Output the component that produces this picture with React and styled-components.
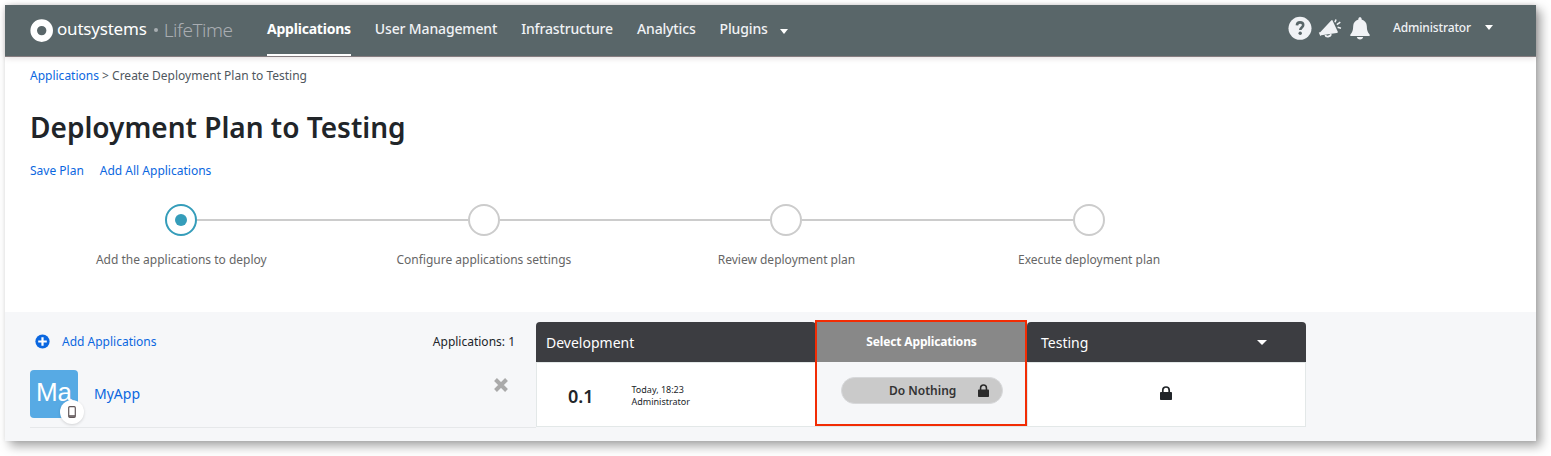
import React from "react";
import styled, { createGlobalStyle } from "styled-components";

const GlobalStyle = createGlobalStyle`
  * { box-sizing: border-box; }
  body {
    margin: 0;
    display: flow-root;
    min-height: 456px;
    background: #fff;
    color: #212529;
    font-family: "Noto Sans", "Open Sans", sans-serif;
    font-size: 12px;
  }
`;

const Window = styled.div`
  width: 1531px;
  height: 436px;
  margin: 5px 0 0 5px;
  display: flex;
  flex-direction: column;
  background: #fff;
  box-shadow: 5px 5px 10px rgba(0, 0, 0, 0.36), 0 0 4px rgba(0, 0, 0, 0.06);
`;

const Header = styled.header`
  flex: none;
  height: 52px;
  padding-left: 25px;
  display: flex;
  align-items: stretch;
  background: #596669;
  border-bottom: 1px solid #857d80;
  box-shadow: 0 1px 6px rgba(60, 20, 30, 0.15);
  color: #f0f2f5;
`;

const Brand = styled.div`
  width: 237px;
  display: flex;
  align-items: flex-start;
  svg { flex: none; margin-top: 14px; }
`;

const BrandName = styled.span`
  margin-left: 4px;
  margin-top: 12px;
  line-height: 24px;
  font-size: 17px;
  letter-spacing: -0.2px;
  color: #fff;
`;

const BrandDot = styled.i`
  width: 4px;
  height: 4px;
  margin: 23px 0 0 7px;
  border-radius: 50%;
  background: #a8aeb2;
`;

const ProductName = styled.span`
  margin-left: 6px;
  margin-top: 12px;
  line-height: 26px;
  font-size: 19px;
  font-weight: 350;
  letter-spacing: -0.45px;
  color: #a9adb2;
`;

const Nav = styled.nav`
  display: flex;
  gap: 24px;
`;

const NavItem = styled.a`
  display: flex;
  height: 51px;
  font-size: 14px;
  line-height: 48px;
  white-space: nowrap;
  font-weight: ${(p) => (p.$active ? 700 : 500)};
  letter-spacing: ${(p) => (p.$active ? "-0.22px" : "-0.15px")};
  color: ${(p) => (p.$active ? "#fff" : "#f0f2f5")};
  border-bottom: 2px solid ${(p) => (p.$active ? "#fff" : "transparent")};
`;

const Caret = styled.i`
  width: 0;
  height: 0;
  border: solid transparent;
  border-width: ${(p) => p.$size || 5}px ${(p) => p.$size || 4}px 0;
  border-top-color: #fff;
`;

const NavCaret = styled(Caret)`
  margin: 24px 0 0 12px;
`;

const Tools = styled.div`
  margin-left: auto;
  margin-right: 43px;
  display: flex;
  align-items: flex-start;
  svg { display: block; margin-top: 11px; }
`;

const UserName = styled.span`
  margin-left: 21px;
  line-height: 45px;
  font-weight: 500;
  letter-spacing: -0.14px;
`;

const UserCaret = styled(Caret)`
  margin: 20px 0 0 14px;
`;

const Intro = styled.section`
  flex: none;
  height: 255px;
  padding: 10px 25px 0;
`;

const Crumbs = styled.div`
  line-height: 18px;
  color: #4f575e;
`;

const Link = styled.a`
  color: #0b67e0;
`;

const Title = styled.h1`
  margin: 21px 0 0;
  font-size: 28px;
  line-height: 42px;
  font-weight: 600;
`;

const Actions = styled.div`
  margin-top: 14px;
  display: flex;
  gap: 16px;
  line-height: 18px;
`;

const Steps = styled.ol`
  list-style: none;
  margin: 24px 0 0;
  padding: 0;
  display: flex;
`;

const Step = styled.li`
  width: 302.6px;
  display: flex;
  flex-direction: column;
  align-items: center;
`;

const Rail = styled.div`
  width: 100%;
  display: flex;
  align-items: center;
`;

const Line = styled.i`
  flex: 1;
  height: 2px;
  background: ${(p) => (p.$hidden ? "transparent" : "#ccc")};
`;

const Circle = styled.i`
  width: 32px;
  height: 32px;
  display: flex;
  align-items: center;
  justify-content: center;
  border-radius: 50%;
  border: 2px solid ${(p) => (p.$active ? "#359dba" : "#ccc")};
  &::after {
    content: "";
    width: 12px;
    height: 12px;
    border-radius: 50%;
    background: ${(p) => (p.$active ? "#359dba" : "transparent")};
  }
`;

const StepLabel = styled.span`
  margin-top: 15px;
  line-height: 18px;
  color: #666;
`;

const Board = styled.section`
  flex: 1;
  padding: 10px 0 0 25px;
  display: flex;
  align-items: flex-start;
  background: #f6f7f9;
`;

const AppList = styled.div`
  width: 506px;
`;

const ListHead = styled.div`
  height: 40px;
  padding: 0 21px 1px 5px;
  display: flex;
  align-items: center;
  a { margin-left: 12px; }
  > span { margin-left: auto; }
`;

const AppRow = styled.div`
  height: 66px;
  padding: 8px 28px 0 0;
  display: flex;
  border-bottom: 1px solid #e6e8ea;
`;

const AppTile = styled.div`
  position: relative;
  width: 48px;
  height: 48px;
  border-radius: 4px;
  background: #57aae4;
  color: #fff;
  text-align: center;
  font: 26px/44px "Liberation Sans", Arial, sans-serif;
`;

const DeviceBadge = styled.span`
  position: absolute;
  left: 30px;
  top: 30px;
  width: 24px;
  height: 24px;
  display: flex;
  align-items: center;
  justify-content: center;
  border-radius: 50%;
  background: #fff;
  box-shadow: 0 1px 3px rgba(0, 0, 0, 0.15);
`;

const AppName = styled(Link)`
  margin-left: 16px;
  font-size: 14px;
  line-height: 48px;
`;

const RemoveIcon = styled.svg`
  margin: 8px 0 0 auto;
`;

const Stage = styled.div`
  width: ${(p) => p.$width}px;
`;

const StageHead = styled.div`
  height: 40px;
  padding: 1px 39px 0 ${(p) => p.$indent}px;
  display: flex;
  align-items: center;
  justify-content: space-between;
  border-radius: 4px 4px 0 0;
  background: #3c3d41;
  color: #fff;
  font-size: 14px;
`;

const StageBody = styled.div`
  height: 65px;
  padding-right: ${(p) => (p.$center ? 2 : 0)}px;
  display: flex;
  align-items: flex-start;
  justify-content: ${(p) => (p.$center ? "center" : "flex-start")};
  background: #fff;
  border: 1px solid #e3e8e8;
  > svg { margin-top: 23px; }
`;

const Version = styled.span`
  margin-left: 31px;
  width: 63.5px;
  line-height: 67px;
  font-size: 18px;
  font-weight: 600;
`;

const Stamp = styled.span`
  margin-top: 21px;
  font-size: 9px;
  line-height: 12px;
`;

const Select = styled.div`
  position: relative;
  width: 211px;
  height: 105px;
  border-bottom: 1px solid #e3e8e8;
  &::after {
    content: "";
    position: absolute;
    inset: -2px 0 0 -1px;
    border: 2px solid #f22c04;
  }
`;

const SelectHead = styled.div`
  height: 40px;
  line-height: 39px;
  background: #888;
  color: #fff;
  text-align: center;
  font-weight: 700;
  letter-spacing: -0.14px;
`;

const Choice = styled.button`
  width: 162px;
  height: 27px;
  margin: 15px 0 0 25px;
  padding: 0 13px 0 47px;
  display: flex;
  align-items: center;
  justify-content: space-between;
  border: 1px solid #d7d8da;
  border-radius: 14px;
  background: #cacaca;
  color: #333;
  font: 600 12px "Noto Sans", sans-serif;
`;

const Lock = ({ width = 11, height = 13, color = "#212529" }) => (
  <svg width={width} height={height} viewBox="0 0 12 14" fill="none">
    <path d="M2.800 7V4.200a3.200 3.200 0 0 1 6.400 0V7" stroke={color} strokeWidth="1.700" />
    <rect y="6" width="12" height="8" rx=".8" fill={color} />
  </svg>
);

const steps = [
  "Add the applications to deploy",
  "Configure applications settings",
  "Review deployment plan",
  "Execute deployment plan",
];

export default function App() {
  return (
    <>
      <GlobalStyle />
      <Window>
        <Header>
          <Brand>
            <svg width="23" height="23" viewBox="0 0 23 23">
              <circle cx="11.7" cy="11.6" r="8" fill="none" stroke="#fff" strokeWidth="6.6" />
            </svg>
            <BrandName>outsystems</BrandName>
            <BrandDot />
            <ProductName>LifeTime</ProductName>
          </Brand>
          <Nav>
            <NavItem $active>Applications</NavItem>
            <NavItem>User Management</NavItem>
            <NavItem>Infrastructure</NavItem>
            <NavItem>Analytics</NavItem>
            <NavItem>
              Plugins
              <NavCaret />
            </NavItem>
          </Nav>
          <Tools>
            <svg width="24" height="24" viewBox="0 0 24 24">
              <circle cx="12" cy="12.3" r="11.5" fill="#f0f2f5" />
              <path d="M8.9 9.4C9 7.4 10.2 6.4 12 6.4c1.900 0 3.200 1.100 3.200 2.700 0 2.300-2.900 2.500-2.900 4.900" fill="none" stroke="#596669" strokeWidth="2.600" />
              <circle cx="12.2" cy="17.300" r="1.700" fill="#596669" />
            </svg>
            <svg width="36" height="24" viewBox="0 0 36 24" fill="#f0f2f5">
              <path d="M20.500 4.400 25.800 15.800C26 16.700 25.500 17 24.700 16.900L9.300 19.200 8.300 20.100 6.800 16.600 8.200 16.200 19.200 4.600C19.700 3.900 20.200 3.800 20.500 4.400Z" />
              <path d="M13.300 19C13.900 21.300 18.600 21 18.900 18.200" fill="none" stroke="#f0f2f5" strokeWidth="1.800" />
              <path d="M23 6.200 24 3.400M24.800 8.600 28.300 6.200M25.600 11.300 29 12.200" fill="none" stroke="#f0f2f5" strokeWidth="1.600" />
            </svg>
            <svg width="24" height="24" viewBox="0 0 24 24" fill="#f0f2f5">
              <path d="M12 1.200c-1 0-1.600.7-1.600 1.600v.6C7.200 4.200 5.300 6.800 5.200 10 5.100 14.400 4.300 16.500 2.600 18.200c-.8.800-.4 1.900.7 1.900h17.400c1.100 0 1.500-1.100.7-1.900-1.700-1.700-2.500-3.800-2.600-8.200-.1-3.200-2-5.800-5.200-6.600v-.6c0-.9-.6-1.600-1.600-1.600Z" />
              <path d="M8.900 20.900h6.200c-.1 1.600-1.400 2.500-3.100 2.500s-3-.9-3.100-2.500Z" />
            </svg>
            <UserName>Administrator</UserName>
            <UserCaret />
          </Tools>
        </Header>
        <Intro>
          <Crumbs>
            <Link>Applications</Link> &gt; Create Deployment Plan to Testing
          </Crumbs>
          <Title>Deployment Plan to Testing</Title>
          <Actions>
            <Link>Save Plan</Link>
            <Link>Add All Applications</Link>
          </Actions>
          <Steps>
            {steps.map((label, i) => (
              <Step key={label}>
                <Rail>
                  <Line $hidden={i === 0} />
                  <Circle $active={i === 0} />
                  <Line $hidden={i === steps.length - 1} />
                </Rail>
                <StepLabel>{label}</StepLabel>
              </Step>
            ))}
          </Steps>
        </Intro>
        <Board>
          <AppList>
            <ListHead>
              <svg width="15" height="15" viewBox="0 0 15 15">
                <circle cx="7.500" cy="7.500" r="7.100" fill="#0b67e0" />
                <path d="M7.500 3.200v8.600M3.200 7.500h8.600" stroke="#fff" strokeWidth="2.200" />
              </svg>
              <Link>Add Applications</Link>
              <span>Applications: 1</span>
            </ListHead>
            <AppRow>
              <AppTile>
                Ma
                <DeviceBadge>
                  <svg width="8" height="12" viewBox="0 0 8 12">
                    <rect x=".7" y=".7" width="6.600" height="10.600" rx="1" fill="#fff" stroke="#62585a" strokeWidth="1.200" />
                    <path d="M1 10h6" stroke="#62585a" strokeWidth="1.600" />
                  </svg>
                </DeviceBadge>
              </AppTile>
              <AppName>MyApp</AppName>
              <RemoveIcon width="14" height="14" viewBox="0 0 14 14">
                <path d="M1.500 1.500l11 11M12.500 1.500l-11 11" stroke="#aaa" strokeWidth="4" />
              </RemoveIcon>
            </AppRow>
          </AppList>
          <Stage $width={280}>
            <StageHead $indent={10}>Development</StageHead>
            <StageBody>
              <Version>0.1</Version>
              <Stamp>
                Today, 18:23
                <br />
                Administrator
              </Stamp>
            </StageBody>
          </Stage>
          <Select>
            <SelectHead>Select Applications</SelectHead>
            <Choice>
              Do Nothing
              <Lock color="#2b2b2b" />
            </Choice>
          </Select>
          <Stage $width={279}>
            <StageHead $indent={14}>
              Testing
              <Caret $size={5} />
            </StageHead>
            <StageBody $center>
              <Lock width={12} height={14} />
            </StageBody>
          </Stage>
        </Board>
      </Window>
    </>
  );
}
